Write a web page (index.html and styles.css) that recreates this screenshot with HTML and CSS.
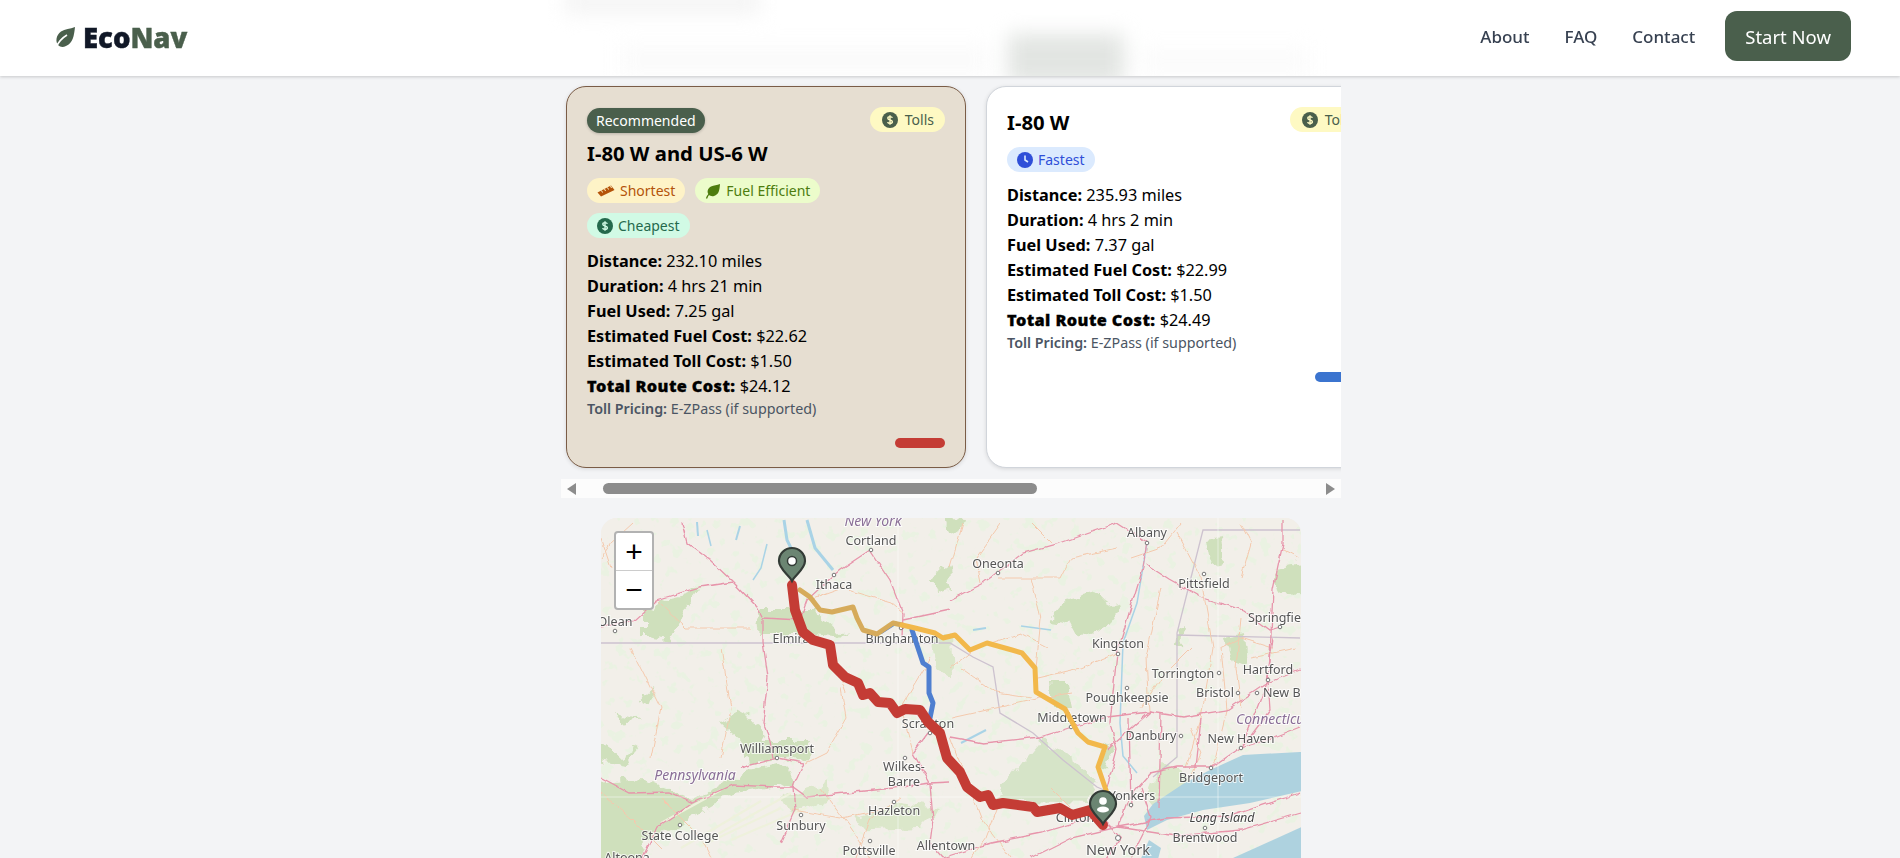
FILE: index.html
```html
<!DOCTYPE html>
<html lang="en">
<head>
  <meta charset="UTF-8" />
  <title>EcoNav</title>
  <link rel="stylesheet" href="styles.css">
</head>
<body>

  <header class="appbar">
    <!-- page content showing through the frosted bar -->
    <div class="frost">
      <span class="frost-a"></span>
      <span class="frost-b"></span>
      <span class="frost-c"></span>
      <span class="frost-d"></span>
    </div>
    <div class="logo">
      <svg class="logo-leaf" viewBox="0 0 20 21">
        <path d="M20 0 C19 9 18 16 11 19 C8 20.500 5 20 3.500 18.500 C0 15 1 8 6 4.500 C10 2 15 2 20 0 Z" fill="#4a5f4c"/>
        <path d="M1 21 C3 15 7 11 12 8" fill="none" stroke="#fff" stroke-width="1.600"/>
      </svg>
      <span class="logo-text">Eco<span class="logo-nav">Nav</span></span>
    </div>
    <nav class="links">
      <a href="#">About</a>
      <a href="#">FAQ</a>
      <a href="#">Contact</a>
      <a href="#" class="start-btn">Start Now</a>
    </nav>
  </header>

  <main class="content">
    <div class="routes">
      <div class="route-list">

        <div class="card card-picked">
          <span class="pill pill-tolls">
            <svg class="ico" viewBox="0 0 16 16"><circle cx="8" cy="8" r="8" fill="currentColor"/><path d="M10.400 5.800 C10 4.900 9 4.600 8 4.600 C6.800 4.600 5.800 5.200 5.800 6.300 C5.800 8.500 10.400 7.400 10.400 9.700 C10.400 10.800 9.300 11.400 8 11.400 C6.900 11.400 6 11 5.600 10.100 M8 3.300 V12.700" fill="none" stroke="#fef9c3" stroke-width="1.400"/></svg>
            Tolls
          </span>
          <span class="badge">Recommended</span>
          <h2 class="route-name">I-80 W and US-6 W</h2>
          <div class="tags">
            <span class="pill pill-short">
              <svg class="ico ico-wide" viewBox="0 0 18 12"><path d="M0.500 7.500 L14 0.500 L17.500 5 L4 11.500 Z" fill="currentColor"/><path d="M4.500 5.500 L5.500 7.500 M7.500 4 L8.500 6 M10.500 2.500 L11.500 4.500 M13.500 1 L14.500 3" stroke="#fef3c7" stroke-width="1"/></svg>
              Shortest
            </span>
            <span class="pill pill-fuel">
              <svg class="ico" viewBox="0 0 16 16"><path d="M15 1 C14.500 7 14 11.500 9 13 C7 13.500 5 13 4 12 C1.500 9 2.500 5.500 6 3.500 C9 2 12 2.500 15 1 Z" fill="currentColor"/><path d="M1.500 15.500 C3 11 6 8.500 9.500 6.500" fill="none" stroke="currentColor" stroke-width="1.300"/></svg>
              Fuel Efficient
            </span>
            <span class="pill pill-cheap">
              <svg class="ico" viewBox="0 0 16 16"><circle cx="8" cy="8" r="8" fill="currentColor"/><path d="M10.400 5.800 C10 4.900 9 4.600 8 4.600 C6.800 4.600 5.800 5.200 5.800 6.300 C5.800 8.500 10.400 7.400 10.400 9.700 C10.400 10.800 9.300 11.400 8 11.400 C6.900 11.400 6 11 5.600 10.100 M8 3.300 V12.700" fill="none" stroke="#d1fae5" stroke-width="1.400"/></svg>
              Cheapest
            </span>
          </div>
          <p class="stat"><b>Distance:</b> 232.10 miles</p>
          <p class="stat"><b>Duration:</b> 4 hrs 21 min</p>
          <p class="stat"><b>Fuel Used:</b> 7.25 gal</p>
          <p class="stat"><b>Estimated Fuel Cost:</b> $22.62</p>
          <p class="stat"><b>Estimated Toll Cost:</b> $1.50</p>
          <p class="stat stat-total"><b>Total Route Cost:</b> $24.12</p>
          <p class="toll-note"><b>Toll Pricing:</b> E-ZPass (if supported)</p>
          <div class="route-bar bar-red"></div>
        </div>

        <div class="card">
          <span class="pill pill-tolls">
            <svg class="ico" viewBox="0 0 16 16"><circle cx="8" cy="8" r="8" fill="currentColor"/><path d="M10.400 5.800 C10 4.900 9 4.600 8 4.600 C6.800 4.600 5.800 5.200 5.800 6.300 C5.800 8.500 10.400 7.400 10.400 9.700 C10.400 10.800 9.300 11.400 8 11.400 C6.900 11.400 6 11 5.600 10.100 M8 3.300 V12.700" fill="none" stroke="#fef9c3" stroke-width="1.400"/></svg>
            Tolls
          </span>
          <h2 class="route-name route-name-first">I-80 W</h2>
          <div class="tags">
            <span class="pill pill-fast">
              <svg class="ico" viewBox="0 0 16 16"><circle cx="8" cy="8" r="8" fill="currentColor"/><path d="M8 3.500 V8 L11 10" fill="none" stroke="#dbeafe" stroke-width="1.600"/></svg>
              Fastest
            </span>
          </div>
          <p class="stat"><b>Distance:</b> 235.93 miles</p>
          <p class="stat"><b>Duration:</b> 4 hrs 2 min</p>
          <p class="stat"><b>Fuel Used:</b> 7.37 gal</p>
          <p class="stat"><b>Estimated Fuel Cost:</b> $22.99</p>
          <p class="stat"><b>Estimated Toll Cost:</b> $1.50</p>
          <p class="stat stat-total"><b>Total Route Cost:</b> $24.49</p>
          <p class="toll-note"><b>Toll Pricing:</b> E-ZPass (if supported)</p>
          <div class="route-bar bar-blue"></div>
        </div>

      </div>
      <div class="scrollbar">
        <span class="arrow-left"></span>
        <span class="thumb"></span>
        <span class="arrow-right"></span>
      </div>
    </div>

    <div class="map">
      <svg class="map-svg" viewBox="0 0 700 340">
        <defs>
          <filter id="rough" x="-5%" y="-5%" width="110%" height="110%">
            <feTurbulence type="fractalNoise" baseFrequency="0.07" numOctaves="3" seed="4"/>
            <feDisplacementMap in="SourceGraphic" scale="16" xChannelSelector="R" yChannelSelector="G"/>
            <feGaussianBlur stdDeviation="0.500"/>
          </filter>
          <filter id="wiggle" x="-5%" y="-5%" width="110%" height="110%">
            <feTurbulence type="fractalNoise" baseFrequency="0.09" numOctaves="2" seed="9"/>
            <feDisplacementMap in="SourceGraphic" scale="5" xChannelSelector="R" yChannelSelector="G"/>
          </filter>
          <filter id="speckle" x="0" y="0" width="100%" height="100%">
            <feTurbulence type="fractalNoise" baseFrequency="0.085" numOctaves="3" seed="21"/>
            <feColorMatrix type="matrix" values="0 0 0 0 0.82  0 0 0 0 0.89  0 0 0 0 0.76  14 0 0 0 -8.400"/>
          </filter>
        </defs>
        <rect x="0" y="0" width="700" height="340" fill="#f2efe9"/>
        <rect x="0" y="0" width="700" height="340" filter="url(#speckle)"/>

        <!-- woods -->
        <g fill="#cfe0bc" filter="url(#rough)">
          <path d="M449 102 L466 82 L496 74 L519 92 L506 109 L477 120 L469 105 Z"/>
          <path d="M399 272 L442 219 L462 235 L496 262 L489 285 L392 282 Z" fill="#d6e4c8"/>
          <path d="M-9 265 L39 259 L92 282 L142 255 L186 245 L192 265 L132 275 L92 299 L42 325 L30 350 L-9 350 Z"/>
          <path d="M119 205 L139 194 L159 205 L166 222 L142 225 Z"/>
          <path d="M42 95 L69 79 L99 72 L82 92 L71 122 L42 118 Z"/>
          <path d="M152 109 L162 92 L216 92 L246 119 L199 115 L159 115 Z"/>
          <path d="M140 222 L212 222 L210 240 L145 245 Z"/>
          <path d="M-9 219 L19 239 L39 225 L22 249 L-9 242 Z"/>
          <path d="M16 195 L39 202 L22 205 Z"/>
          <path d="M40 178 L50 170 L51 180 L42 186 Z"/>
          <path d="M606 22 L620 20 L622 42 L610 45 Z"/>
          <path d="M672 50 L708 45 L708 80 L680 78 Z"/>
          <path d="M575 110 L582 105 L580 130 L573 125 Z"/>
          <path d="M625 118 L645 115 L648 150 L632 145 Z"/>
          <path d="M450 165 L465 165 L470 190 L452 190 Z"/>
          <path d="M505 225 L515 230 L505 255 L498 240 Z"/>
          <path d="M250 300 L300 285 L340 290 L320 310 L270 312 Z" fill="#dbe7ca"/>
          <path d="M330 60 L345 50 L350 70 L335 75 Z"/>
          <path d="M345 0 L360 2 L356 15 L348 12 Z"/>
          <path d="M180 280 L225 265 L232 280 L190 298 Z" fill="#dbe7ca"/>
          <path d="M560 245 L590 262 L570 290 L545 285 Z" fill="#dbe7ca"/>
          <path d="M330 115 L350 118 L352 160 L335 150 Z" fill="#dbe7ca"/>
        </g>
        <g fill="none" stroke="#eef1dc" stroke-width="2.200">
          <path d="M80 330 L160 283"/>
          <path d="M110 320 L190 275"/>
          <path d="M60 305 L120 272"/>
          <path d="M130 322 L205 290"/>
          <path d="M100 328 L180 290"/>
        </g>

        <!-- water -->
        <g fill="#aed2df">
          <path d="M552 286 L582 266 L609 252 L642 237 L699 234 L705 234 L705 272 L649 285 L602 292 L566 302 L546 312 L543 298 Z"/>
          <path d="M632 340 L705 307 L705 345 L632 345 Z"/>
          <path d="M538 345 L548 322 L560 330 L556 345 Z"/>
        </g>
        <g fill="none" stroke="#a9d3e6">
          <path d="M206 2 L214 30 L232 52" stroke-width="3"/>
          <path d="M183 2 L186 22 L191 32" stroke-width="3"/>
          <path d="M139 8 L135 22" stroke-width="2"/>
          <path d="M166 26 L160 50 L152 62" stroke-width="1.500"/>
          <path d="M106 12 L110 28" stroke-width="1.500"/>
          <path d="M96 4 L97 18" stroke-width="2"/>
          <path d="M546 25 L536 85 L522 125 L519 205 L522 238 L536 255" stroke-width="1.500"/>
          <path d="M420 108 L450 112" stroke-width="1.500"/>
          <path d="M372 112 L385 110" stroke-width="2"/>
          <path d="M360 225 L385 212" stroke-width="2"/>
        </g>

        <!-- borders -->
        <g fill="none" stroke="#cdc2cf" stroke-width="1.300">
          <path d="M0 125 H349 L372 139 L392 149 L399 195 L432 215 L462 242 L496 269 L519 279"/>
          <path d="M552 259 L576 239 L576 115 L602 12 H699"/>
          <path d="M576 117 L699 120"/>
        </g>

        <!-- small roads -->
        <g fill="none" stroke="#f4c9ad" stroke-width="1" filter="url(#wiggle)">
          <path d="M0 40 L10 25 L32 5"/>
          <path d="M56 82 L85 110 L150 110"/>
          <path d="M240 170 L245 200 L225 235 L205 245"/>
          <path d="M330 140 L300 190 L312 235"/>
          <path d="M206 82 L240 70 L290 85 L302 95"/>
          <path d="M349 150 L375 130 L420 115 L449 130"/>
          <path d="M349 50 L362 5"/>
          <path d="M436 160 L480 150 L516 135"/>
          <path d="M398 60 L460 60 L470 40 L516 30"/>
          <path d="M576 15 L600 60 L612 130 L600 200 L585 250"/>
          <path d="M560 70 L545 140 L548 194"/>
          <path d="M620 130 L626 192 L612 249"/>
          <path d="M672 130 L640 120 L620 130"/>
          <path d="M350 200 L440 180 L470 175"/>
          <path d="M349 219 L380 300 L410 340"/>
          <path d="M220 270 L250 310 L270 340"/>
          <path d="M0 20 L10 50"/>
          <path d="M0 275 L30 300 L60 330"/>
          <path d="M400 280 L385 320 L370 340"/>
          <path d="M450 270 L470 290"/>
          <path d="M680 30 L699 40"/>
          <path d="M300 280 L270 300 L255 340"/>
          <path d="M192 292 L240 300 L290 290"/>
          <path d="M60 280 L100 320 L110 340"/>
          <path d="M530 40 L560 30 L580 5"/>
          <path d="M640 60 L650 25 L640 5"/>
          <path d="M640 100 L635 150 L640 190"/>
          <path d="M590 130 L560 160 L540 190"/>
          <path d="M590 210 L600 235 L590 260"/>
          <path d="M430 60 L440 100 L435 150"/>
          <path d="M380 65 L375 40 L400 5"/>
          <path d="M430 5 L450 25"/>
          <path d="M650 140 L695 130"/>
          <path d="M360 150 L395 175 L430 180"/>
          <path d="M225 120 L245 175"/>
          <path d="M120 130 L130 190 L120 240"/>
          <path d="M30 130 L60 190 L50 240"/>
        </g>

        <!-- main roads -->
        <g fill="none" stroke="#e795ab" stroke-width="1.300" filter="url(#wiggle)">
          <path d="M81 5 L86 25 L109 42 L132 64 L156 89 L162 100 L162 125 L167 159 L162 205 L169 222 L172 240"/>
          <path d="M132 64 L99 69 L56 82 L32 104 L-1 109"/>
          <path d="M-1 259 L29 275 L69 274 L92 285 L132 267 L176 269 L192 269 L206 279 L292 270 L329 265 L349 264"/>
          <path d="M139 250 L176 240 L203 245 L192 269 L194 292 L179 325"/>
          <path d="M92 285 L56 309 L42 339"/>
          <path d="M327 215 L312 235 L329 265 L332 302 L329 325 L342 340"/>
          <path d="M269 32 L239 52 L233 57 L206 82 L199 102 L162 100"/>
          <path d="M269 32 L289 62 L302 95 L301 119"/>
          <path d="M302 102 L349 92"/>
          <path d="M349 82 L382 65 L422 35 L459 25 L516 5 L546 24"/>
          <path d="M546 24 L542 49 L529 92 L516 135 L509 205 L516 232 L506 269"/>
          <path d="M546 47 L569 62 L599 79 L642 92 L669 112 L679 109"/>
          <path d="M682 2 L682 25 L672 72 L669 139 L667 162 L669 192 L649 219 L639 230"/>
          <path d="M506 232 L549 194 L582 199 L626 192 L666 165 L699 152"/>
          <path d="M549 255 L576 249 L612 249 L639 230 L666 222 L699 209"/>
          <path d="M349 219 L382 225 L439 219 L471 209 L506 199 L549 194"/>
          <path d="M517 309 L565 300 L629 298 L699 275"/>
          <path d="M517 309 L575 318 L640 312 L699 295"/>
          <path d="M517 309 L470 320 L430 340"/>
          <path d="M517 309 L528 280 L550 255"/>
          <path d="M490 300 L440 315 L390 325 L342 340"/>
          <path d="M540 270 L550 300 L530 340"/>
          <path d="M528 200 L530 290"/>
          <path d="M560 195 L558 290"/>
          <path d="M600 200 L595 250"/>
          <path d="M500 300 L520 320 L505 340"/>
          <path d="M640 230 L666 165 L672 120"/>
        </g>
        <path d="M297 0 V340 M617 0 V340 M0 279 H700" fill="none" stroke="#fff" stroke-width="0.700" opacity="0.700"/>

        <!-- place labels -->
        <g class="labels">
          <text x="270" y="27">Cortland</text>
          <text x="233" y="71">Ithaca</text>
          <text x="14" y="108">Olean</text>
          <text x="190" y="125">Elmira</text>
          <text x="301" y="125">Binghamton</text>
          <text x="327" y="210">Scranton</text>
          <text x="176" y="235">Williamsport</text>
          <text x="303" y="253">Wilkes-</text>
          <text x="303" y="268">Barre</text>
          <text x="293" y="297">Hazleton</text>
          <text x="200" y="312">Sunbury</text>
          <text x="79" y="322">State College</text>
          <text x="268" y="337">Pottsville</text>
          <text x="345" y="332">Allentown</text>
          <text x="26" y="344">Altoona</text>
          <text x="546" y="19">Albany</text>
          <text x="397" y="50">Oneonta</text>
          <text x="603" y="70">Pittsfield</text>
          <text x="647" y="104" class="start">Springfield</text>
          <text x="517" y="130">Kingston</text>
          <text x="582" y="160">Torrington</text>
          <text x="667" y="156">Hartford</text>
          <text x="526" y="184">Poughkeepsie</text>
          <text x="614" y="179">Bristol</text>
          <text x="662" y="179" class="start">New Britain</text>
          <text x="471" y="204">Middletown</text>
          <text x="550" y="222">Danbury</text>
          <text x="640" y="225">New Haven</text>
          <text x="610" y="264">Bridgeport</text>
          <text x="531" y="282">Yonkers</text>
          <text x="474" y="304">Clifton</text>
          <text x="604" y="324">Brentwood</text>
          <text x="517" y="337" class="city">New York</text>
          <text x="621" y="304" class="island">Long Island</text>
          <text x="272" y="8" class="region">New York</text>
          <text x="94" y="262" class="region">Pennsylvania</text>
          <text x="635" y="206" class="region start">Connecticut</text>
        </g>
        <g fill="#fff" stroke="#777" stroke-width="1">
          <circle cx="270" cy="32" r="1.800"/>
          <circle cx="233" cy="57" r="1.800"/>
          <circle cx="14" cy="113" r="1.800"/>
          <circle cx="300" cy="110" r="1.800"/>
          <circle cx="329" cy="215" r="1.800"/>
          <circle cx="176" cy="240" r="1.800"/>
          <circle cx="304" cy="240" r="1.800"/>
          <circle cx="293" cy="284" r="1.800"/>
          <circle cx="200" cy="297" r="1.800"/>
          <circle cx="79" cy="307" r="1.800"/>
          <circle cx="269" cy="323" r="1.800"/>
          <circle cx="546" cy="25" r="1.800"/>
          <circle cx="397" cy="55" r="1.800"/>
          <circle cx="603" cy="56" r="1.800"/>
          <circle cx="679" cy="109" r="1.800"/>
          <circle cx="517" cy="136" r="1.800"/>
          <circle cx="618" cy="155" r="1.800"/>
          <circle cx="667" cy="162" r="1.800"/>
          <circle cx="526" cy="170" r="1.800"/>
          <circle cx="637" cy="175" r="1.800"/>
          <circle cx="656" cy="175" r="1.800"/>
          <circle cx="470" cy="209" r="1.800"/>
          <circle cx="580" cy="218" r="1.800"/>
          <circle cx="640" cy="230" r="1.800"/>
          <circle cx="610" cy="250" r="1.800"/>
          <circle cx="530" cy="287" r="1.800"/>
          <circle cx="604" cy="310" r="1.800"/>
          <circle cx="517" cy="320" r="2.500"/>
        </g>

        <!-- routes -->
        <g fill="none" stroke-linecap="round" stroke-linejoin="round">
          <path d="M280 114 L294 105" stroke="#5b87d4" stroke-width="4"/>
          <path d="M311 112 L322 145 L328 149 L328 175 L332 185 L329 200" stroke="#4f7fd0" stroke-width="5"/>
          <path d="M199 72 L209 79 L219 92 L231 94 L252 89 L256 100 L262 112 L276 116 L292 105 L301 107" stroke="#d6ab5b" stroke-width="5"/>
          <path d="M301 107 L314 110 L334 115 L342 120 L354 117 L369 132 L386 125 L411 132 L421 135 L434 150 L435 174 L464 191 L477 215 L487 224 L504 229 L497 249 L506 275" stroke="#f2b84b" stroke-width="5"/>
          <path d="M191 67 L194 92 L202 114 L212 122 L229 127 L232 147 L244 159 L257 165 L262 177 L269 175 L277 184 L289 185 L296 195 L304 191 L319 192 L327 204 L339 215 L346 240 L359 254 L366 269 L379 279 L387 277 L392 287 L402 285 L432 289 L436 294 L459 290 L471 297 L489 292 L502 307" stroke="#c43c35" stroke-width="10"/>
        </g>

        <!-- markers -->
        <g transform="translate(191 44)">
          <path d="M0 19 C-3 13 -13 7 -13 -1 A13 13 0 1 1 13 -1 C13 7 3 13 0 19 Z" fill="#6b8572" stroke="#333b36" stroke-width="2.200"/>
          <circle cx="0" cy="-1" r="4.500" fill="#fff" stroke="#333b36" stroke-width="1.500"/>
        </g>
        <g transform="translate(502 287)">
          <path d="M0 19 C-3 13 -13 7 -13 -1 A13 13 0 1 1 13 -1 C13 7 3 13 0 19 Z" fill="#6b8572" stroke="#333b36" stroke-width="2.200"/>
          <circle cx="0" cy="-4" r="3.800" fill="#fff"/>
          <ellipse cx="0" cy="4.500" rx="6" ry="3" fill="#fff"/>
        </g>
      </svg>

      <div class="zoom-box">
        <div class="zoom-btn zoom-in">+</div>
        <div class="zoom-btn">−</div>
      </div>
    </div>
  </main>

</body>
</html>
```

FILE: styles.css
```css
html {
  overflow: hidden;
}

body {
  font-family: 'Noto Sans', sans-serif;
  background: #f3f4f6;
  margin: 0;
  height: 858px;
  overflow: hidden;
  color: #000;
}

/* top bar */
.appbar {
  position: relative;
  box-sizing: border-box;
  height: 76px;
  background: #fff;
  display: flex;
  justify-content: space-between;
  align-items: center;
  padding: 0 49px 4px 55px;
  box-shadow: 0 1px 3px rgba(0, 0, 0, 0.18);
  overflow: hidden;
}

.frost {
  position: absolute;
  inset: 0;
  filter: blur(10px);
}

.frost span {
  position: absolute;
  display: block;
}

.frost-a {
  left: 565px;
  top: -10px;
  width: 195px;
  height: 24px;
  background: #f4f4f4;
}

.frost-b {
  left: 1008px;
  top: 34px;
  width: 116px;
  height: 50px;
  background: #e2e5e2;
}

.frost-c {
  left: 620px;
  top: 45px;
  width: 370px;
  height: 30px;
  background: #fbfbfb;
}

.frost-d {
  left: 1140px;
  top: 48px;
  width: 170px;
  height: 26px;
  background: #fbfbfb;
}

.logo {
  position: relative;
  display: flex;
  align-items: center;
  gap: 8px;
  margin-top: 3px;
}

.logo-leaf {
  width: 20px;
  height: 21px;
}

.logo-text {
  font-size: 27.500px;
  font-weight: 900;
  color: #111827;
  line-height: 1;
  -webkit-text-stroke: 0.4px currentColor;
}

.logo-nav {
  color: #4a5f4c;
}

.links {
  position: relative;
  display: flex;
  align-items: center;
  gap: 35px;
}

.links a {
  text-decoration: none;
  color: #374151;
  font-size: 17px;
  font-weight: 500;
}

.links .start-btn {
  background: #4a5f4c;
  color: #fff;
  font-size: 18.500px;
  font-weight: 400;
  height: 50px;
  display: flex;
  align-items: center;
  padding: 0 20px;
  border-radius: 12px;
  margin-left: -5px;
}

/* route cards */
.content {
  display: flex;
  flex-direction: column;
  align-items: center;
  padding-left: 2px;
}

.routes {
  width: 780px;
}

.route-list {
  display: flex;
  gap: 20px;
  padding: 10px 0 11px 5px;
  overflow: hidden;
}

.card {
  position: relative;
  flex: 0 0 400px;
  box-sizing: border-box;
  background: #fff;
  border: 1px solid #d1d5db;
  border-radius: 20px;
  padding: 20px 20px 19px;
  box-shadow: 0 1px 4px rgba(0, 0, 0, 0.12);
}

.card-picked {
  background: #e6ded1;
  border-color: #7a5c46;
}

.badge {
  display: block;
  width: fit-content;
  background: #4a5f4c;
  color: #fff;
  font-size: 14px;
  line-height: 25px;
  padding: 0 9px;
  border-radius: 13px;
  box-shadow: 0 1px 3px rgba(0, 0, 0, 0.2);
  margin-top: 1px;
}

.route-name {
  font-size: 20.300px;
  font-weight: 700;
  line-height: 30px;
  margin: 5px 0 10px;
}

.route-name-first {
  margin-top: 0;
}

.tags {
  display: flex;
  flex-wrap: wrap;
  gap: 10px;
  max-width: 300px;
  margin-bottom: 11px;
}

.pill {
  display: inline-flex;
  align-items: center;
  gap: 5px;
  height: 25px;
  padding: 0 10px;
  border-radius: 13px;
  font-size: 14px;
  white-space: nowrap;
}

.pill-tolls {
  position: absolute;
  top: 20px;
  right: 20px;
  gap: 7px;
  padding: 0 11px 0 12px;
  background: #fef9c3;
  color: #4a5f4c;
}

.pill-short {
  background: #fef3c7;
  color: #b45309;
}

.pill-fuel {
  background: #ecfccb;
  color: #4d7c0f;
}

.pill-cheap {
  background: #d1fae5;
  color: #24694c;
}

.pill-fast {
  background: #dbeafe;
  color: #2f4fd8;
}

.ico {
  width: 16px;
  height: 16px;
  flex: none;
}

.ico-wide {
  width: 18px;
  height: 12px;
}

.stat {
  font-size: 16.300px;
  line-height: 25px;
  margin: 0;
}

.stat b {
  font-weight: 700;
}

.stat-total b {
  font-weight: 900;
  letter-spacing: 0.4px;
  -webkit-text-stroke: 0.3px currentColor;
}

.toll-note {
  font-size: 14.300px;
  line-height: 19px;
  margin: 0;
  color: #4b5563;
}

.toll-note b {
  font-weight: 600;
}

.route-bar {
  width: 50px;
  height: 10px;
  border-radius: 5px;
  margin: 20px 0 0 auto;
}

.bar-red {
  background: #c43c35;
}

.bar-blue {
  background: #3b74cf;
}

/* scrollbar under the cards */
.scrollbar {
  display: flex;
  align-items: center;
  height: 19px;
  background: #fcfcfc;
  padding: 0 6px;
}

.arrow-left {
  border-right: 9px solid #8c8c8c;
  border-top: 6px solid transparent;
  border-bottom: 6px solid transparent;
}

.arrow-right {
  margin-left: auto;
  border-left: 9px solid #8c8c8c;
  border-top: 6px solid transparent;
  border-bottom: 6px solid transparent;
}

.thumb {
  width: 434px;
  height: 11px;
  margin-left: 27px;
  background: #8c8c8c;
  border-radius: 6px;
}

/* map */
.map {
  position: relative;
  width: 700px;
  height: 340px;
  margin-top: 20px;
  border-radius: 16px 16px 0 0;
  overflow: hidden;
  background: #f2efe9;
}

.map-svg {
  display: block;
  width: 700px;
  height: 340px;
  filter: blur(0.4px);
}

.labels text {
  font-family: 'Noto Sans', sans-serif;
  font-size: 12.500px;
  fill: #555;
  text-anchor: middle;
  paint-order: stroke;
  stroke: rgba(255, 255, 255, 0.75);
  stroke-width: 2px;
}

.labels .start {
  text-anchor: start;
}

.labels .city {
  font-size: 14.500px;
}

.labels .region {
  font-size: 14px;
  font-style: italic;
  fill: #8a6f97;
}

.labels .island {
  font-style: italic;
  fill: #444;
}

.zoom-box {
  position: absolute;
  top: 13px;
  left: 13px;
  width: 36px;
  border: 2px solid rgba(0, 0, 0, 0.3);
  border-radius: 4px;
  background: #fff;
}

.zoom-btn {
  height: 37px;
  display: flex;
  align-items: center;
  justify-content: center;
  font-family: 'Liberation Sans', sans-serif;
  font-size: 30px;
  line-height: 1;
  color: #000;
}

.zoom-in {
  border-bottom: 1px solid #ccc;
}
```
